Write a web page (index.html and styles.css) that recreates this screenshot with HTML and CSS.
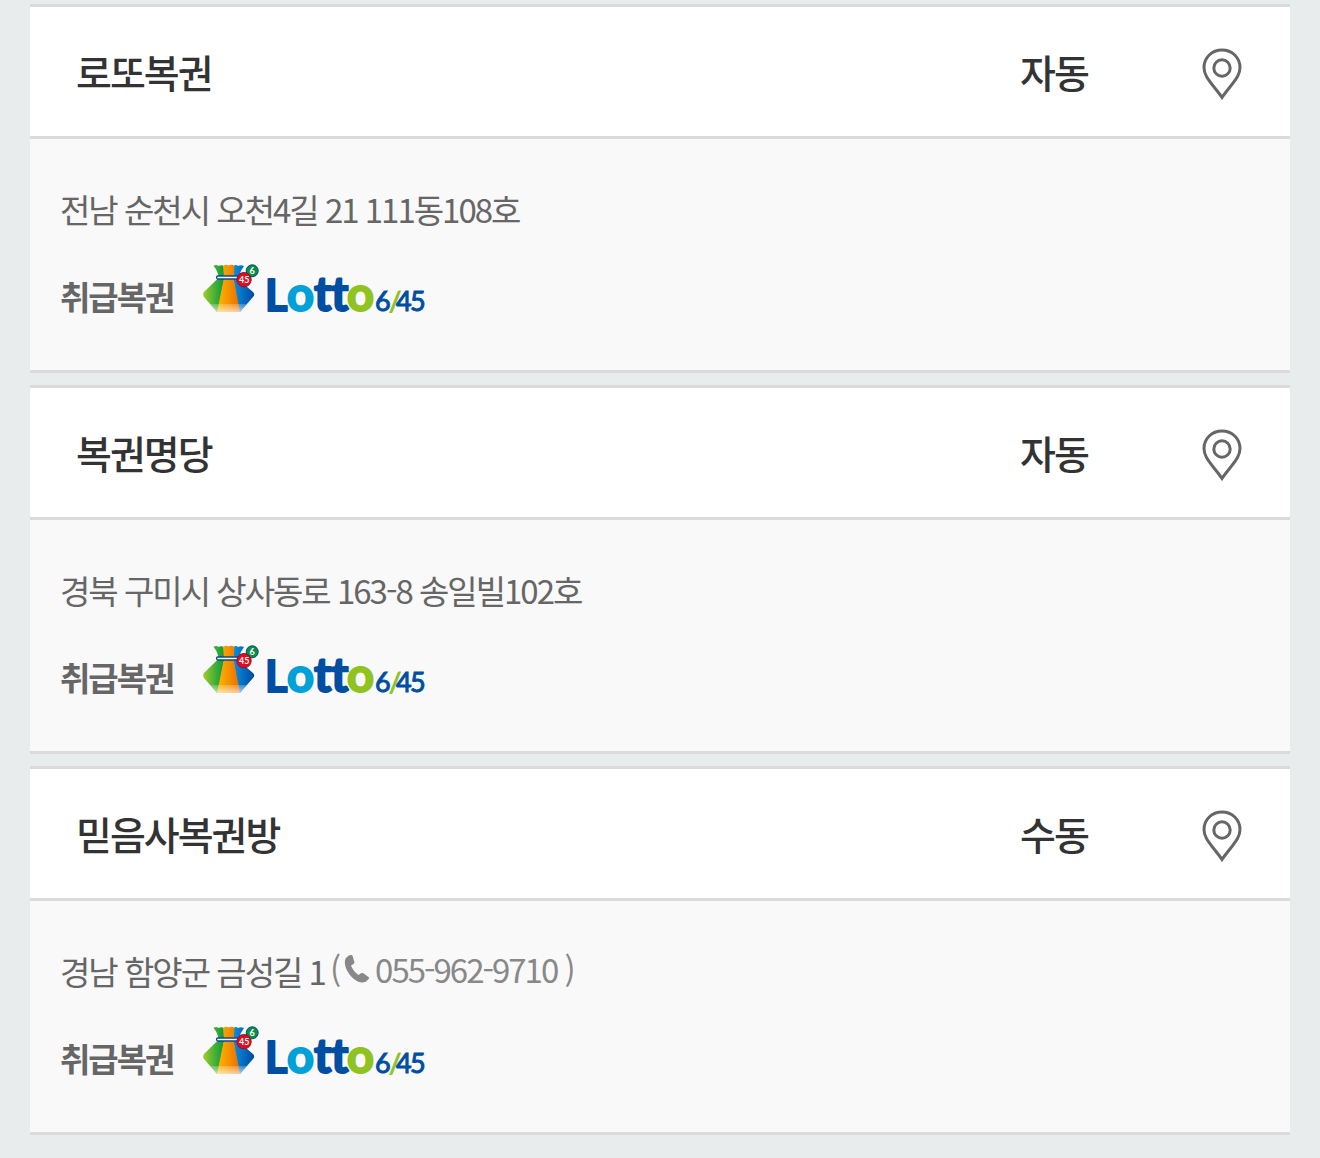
FILE: index.html
```html
<!DOCTYPE html>
<html lang="ko">
<head>
<meta charset="utf-8">
<meta name="viewport" content="width=device-width, initial-scale=1">
<title>로또복권 판매점</title>
<link rel="stylesheet" href="styles.css">
</head>
<body>
<svg class="defs" aria-hidden="true">
  <defs>
    <linearGradient id="green" x1="0" x2="1" y1="0" y2="0"><stop offset="0" stop-color="#a6cb2c"/><stop offset=".5" stop-color="#4fb336"/><stop offset="1" stop-color="#0b9a3c"/></linearGradient>
    <linearGradient id="orange" x1="0" x2="1" y1="0" y2="0"><stop offset="0" stop-color="#fdb900"/><stop offset="1" stop-color="#ec6c00"/></linearGradient>
    <linearGradient id="blue" x1="0" x2="1" y1="0" y2="0"><stop offset="0" stop-color="#0a8ee0"/><stop offset="1" stop-color="#0049a0"/></linearGradient>
    <linearGradient id="shine" x1="0" x2="0" y1="0" y2="1"><stop offset="0" stop-color="#fff" stop-opacity=".2"/><stop offset="1" stop-color="#fff" stop-opacity=".65"/></linearGradient>
    <symbol id="pin" viewBox="0 0 40 52">
      <path d="M20 49.500C15 42 8.500 35.500 4.500 28.500C2.600 25 2 22.500 2 19.500C2 9.500 10 2 20 2S38 9.500 38 19.500C38 22.500 37.400 25 35.500 28.500C31.500 35.500 25 42 20 49.500Z" fill="none" stroke="#666" stroke-width="3"/>
      <circle cx="20" cy="20" r="8.200" fill="none" stroke="#666" stroke-width="3"/>
    </symbol>
    <symbol id="phone" viewBox="0 0 26 30">
      <path d="M6.500 1Q8 .5 8.600 2L10.400 8Q10.500 9.500 9 10.300L7 11.500Q9 17 14.500 21L16.500 19.500Q18 18.500 19.300 19.300L24.500 23Q25.500 24 24.500 25.200Q21.500 29 17.500 28.500Q11 27.500 5.500 20.500Q-.5 12 1.200 5.500Q2.200 2.500 6.500 1Z" fill="#888"/>
    </symbol>
    <symbol id="lotto" viewBox="0 0 224 50">
      <path d="M10.500 3Q13 1 15.500 3Q18 1.500 21 3V17L15 49H14L1 34Q-.8 31.500 1 29Q10 20 15.500 15Q15 8 10.500 3Z" fill="url(#green)"/>
      <path d="M30.500 17V3Q33 1 35 3Q37.500 1.500 41 3Q37 8 36 14Q41 22 50 29Q52.500 31.500 50 34L37 49H36Z" fill="url(#blue)"/>
      <path d="M20 3Q23 1 25.500 2.500Q28.500 1 31.500 3L30.500 15L37 49H14L21 15Z" fill="url(#orange)"/>
      <path d="M7 41H44L37 49H14Z" fill="url(#shine)"/>
      <rect x="13.500" y="13" width="25" height="3" rx="1.500" fill="#fff" stroke="#004c92" stroke-width="1.300"/>
      <circle cx="49.200" cy="7.800" r="6" fill="#079044" stroke="#05477f"/>
      <circle cx="41" cy="16.700" r="7.200" fill="#e4091c" stroke="#8b1730"/>
      <text class="ball" x="46.500" y="11" font-size="9">6</text>
      <text class="ball" x="36" y="20" font-size="9">45</text>
      <text class="word" y="48"><tspan class="navy" x="62" font-size="43">L</tspan><tspan class="sky" x="84" font-size="47">o</tspan><tspan class="navy" x="111" font-size="47">t</tspan><tspan class="navy" x="128" font-size="47">t</tspan><tspan class="lime" x="144" font-size="47">o</tspan></text>
      <text class="number" y="48" font-size="27"><tspan class="navy" x="172">6</tspan><tspan class="lime" x="186">/</tspan><tspan class="navy" x="193">4</tspan><tspan class="navy" x="207">5</tspan></text>
    </symbol>
  </defs>
</svg>
<main class="stores">
  <article class="store">
    <header class="head">
      <h2 class="name">로또복권</h2>
      <span class="type">자동</span>
      <a class="map" href="#map1" aria-label="위치 보기"><svg class="pin"><use href="#pin"/></svg></a>
    </header>
    <div class="info">
      <p class="address">전남 순천시 오천4길 21 111동108호</p>
      <div class="products"><strong class="label">취급복권</strong><svg class="logo" role="img" aria-label="Lotto 6/45"><use href="#lotto"/></svg></div>
    </div>
  </article>
  <article class="store">
    <header class="head">
      <h2 class="name">복권명당</h2>
      <span class="type">자동</span>
      <a class="map" href="#map2" aria-label="위치 보기"><svg class="pin"><use href="#pin"/></svg></a>
    </header>
    <div class="info">
      <p class="address">경북 구미시 상사동로 163-8 송일빌102호</p>
      <div class="products"><strong class="label">취급복권</strong><svg class="logo" role="img" aria-label="Lotto 6/45"><use href="#lotto"/></svg></div>
    </div>
  </article>
  <article class="store">
    <header class="head">
      <h2 class="name">믿음사복권방</h2>
      <span class="type">수동</span>
      <a class="map" href="#map3" aria-label="위치 보기"><svg class="pin"><use href="#pin"/></svg></a>
    </header>
    <div class="info">
      <p class="address">경남 함양군 금성길 1 <a class="tel" href="tel:055-962-9710"><span>(</span><svg class="phone"><use href="#phone"/></svg><span>055-962-9710 )</span></a></p>
      <div class="products"><strong class="label">취급복권</strong><svg class="logo" role="img" aria-label="Lotto 6/45"><use href="#lotto"/></svg></div>
    </div>
  </article>
</main>
</body>
</html>
```
FILE: styles.css
```css
* { box-sizing: border-box; }
body {
  margin: 0;
  background: #e8eced;
  color: #666;
  font-family: "Noto Sans CJK KR", sans-serif;
  font-size: 33px;
  letter-spacing: -2px;
}
.defs { position: absolute; width: 0; height: 0; }
.stores {
  display: flex;
  flex-direction: column;
  gap: 12px;
  padding: 4px 30px 23px;
}
.store {
  border-top: 3px solid #dbdbdb;
  border-bottom: 3px solid #dbdbdb;
  background: #f9f9f9;
}
.head {
  display: grid;
  grid-template-columns: 1fr 200px 136px;
  align-items: center;
  padding: 36px 0;
  border-bottom: 3px solid #dbdbdb;
  background: #fff;
  color: #333;
  font-size: 39px;
  line-height: 57px;
}
.name {
  margin: 0;
  padding-left: 46px;
  font-size: 39px;
  font-weight: 500;
}
.type { text-align: center; font-weight: 500; }
.map { display: flex; justify-content: center; padding-top: 5px; }
.pin { width: 40px; height: 52px; }
.info { padding: 46px 30px 57px; }
.address {
  display: flex;
  flex-wrap: wrap;
  column-gap: 5px;
  margin: 0 0 30px;
  line-height: 48px;
}
.tel {
  display: flex;
  align-items: center;
  gap: 5px;
  padding-bottom: 4px;
  color: #888;
  line-height: 44px;
  text-decoration: none;
}
.phone { width: 26px; height: 30px; }
.products { display: flex; align-items: flex-end; gap: 30px; }
.label { font-weight: 700; line-height: 34px; }
.logo { width: 224px; height: 50px; letter-spacing: 0; }
.word { font-family: Lato, sans-serif; font-weight: 700; stroke-width: 2px; stroke-linejoin: round; }
.number { font-family: Lato, sans-serif; font-weight: 400; stroke-width: 1px; }
.navy { fill: #004ea2; stroke: #004ea2; }
.sky { fill: #00a0d8; stroke: #00a0d8; }
.lime { fill: #90c31f; stroke: #90c31f; }
.ball { font-family: Lato, sans-serif; font-weight: 700; fill: #fff; }
```
